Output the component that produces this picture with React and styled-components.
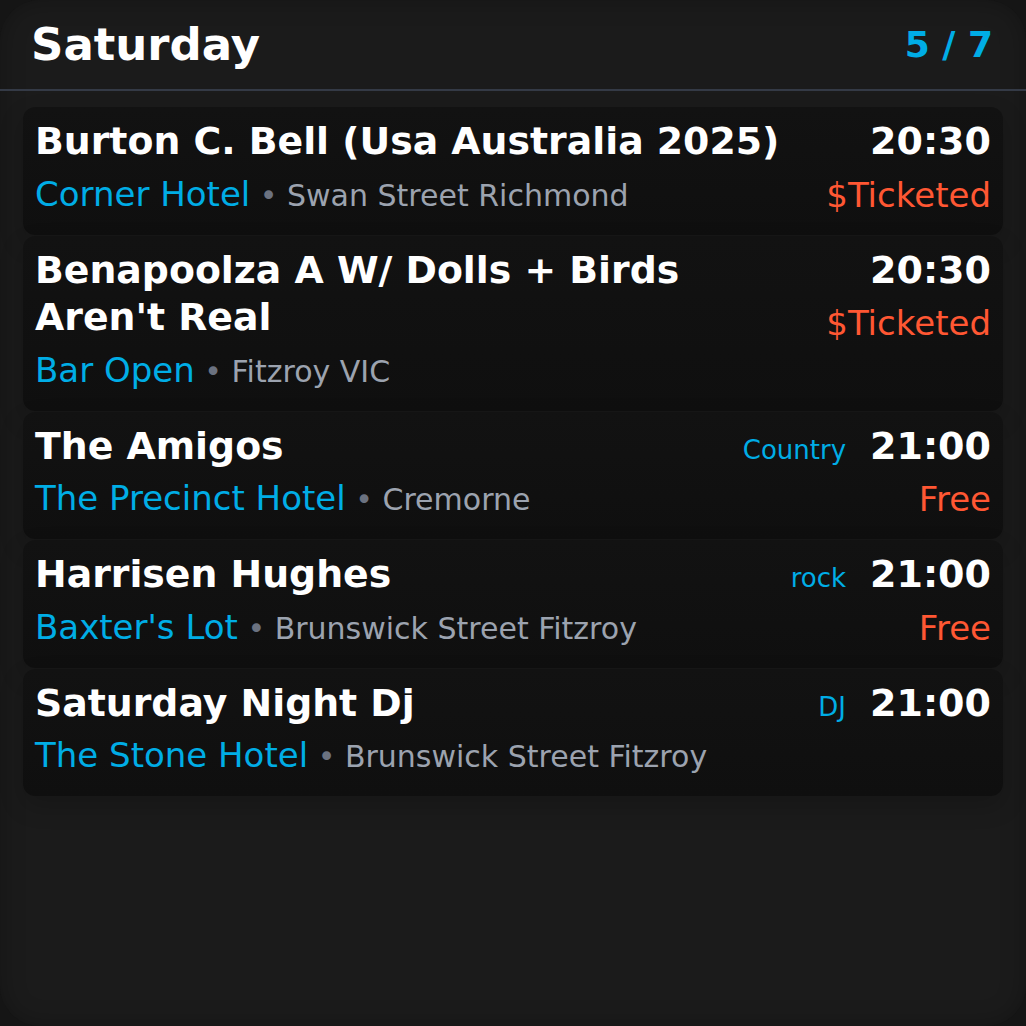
import React from "react";
import styled, { createGlobalStyle } from "styled-components";

const events = [
  {
    title: "Burton C. Bell (Usa Australia 2025)",
    venue: "Corner Hotel",
    suburb: "Swan Street Richmond",
    time: "20:30",
    price: "$Ticketed",
  },
  {
    title: "Benapoolza A W/ Dolls + Birds Aren't Real",
    venue: "Bar Open",
    suburb: "Fitzroy VIC",
    time: "20:30",
    price: "$Ticketed",
  },
  {
    title: "The Amigos",
    venue: "The Precinct Hotel",
    suburb: "Cremorne",
    time: "21:00",
    genre: "Country",
    price: "Free",
  },
  {
    title: "Harrisen Hughes",
    venue: "Baxter's Lot",
    suburb: "Brunswick Street Fitzroy",
    time: "21:00",
    genre: "rock",
    price: "Free",
  },
  {
    title: "Saturday Night Dj",
    venue: "The Stone Hotel",
    suburb: "Brunswick Street Fitzroy",
    time: "21:00",
    genre: "DJ",
  },
];

const App = () => {
  return (
    <>
      <GlobalStyle />
      <Screen>
        <Header>
          <Day>Saturday</Day>
          <Pager>5 / 7</Pager>
        </Header>
        <List>
          {events.map((ev, i) => (
            <Card key={i}>
              <Info>
                <Title>{ev.title}</Title>
                <Place>
                  <Venue>{ev.venue}</Venue>
                  <Dot> • </Dot>
                  <Suburb>{ev.suburb}</Suburb>
                </Place>
              </Info>
              <Side>
                <TimeRow>
                  {ev.genre && <Genre>{ev.genre}</Genre>}
                  <Time>{ev.time}</Time>
                </TimeRow>
                {ev.price && <Price>{ev.price}</Price>}
              </Side>
            </Card>
          ))}
        </List>
      </Screen>
    </>
  );
};

const GlobalStyle = createGlobalStyle`
  html, body {
    margin: 0;
    padding: 0;
    background: #151515;
  }
  body {
    font-family: "DejaVu Sans", "Liberation Sans", sans-serif;
  }
`;

const Screen = styled.div`
  width: 1026px;
  height: 1026px;
  box-sizing: border-box;
  background: #1b1b1b;
  border-radius: 40px;
  overflow: hidden;
  box-shadow: inset 0 0 24px rgba(0, 0, 0, 0.25);
`;

const Header = styled.div`
  display: flex;
  align-items: center;
  justify-content: space-between;
  padding: 18px 33px 18px 31px;
  border-bottom: 2px solid #343a46;
`;

const Day = styled.h1`
  margin: 0;
  font-size: 45px;
  line-height: 53px;
  font-weight: bold;
  color: #ffffff;
`;

const Pager = styled.div`
  font-size: 36px;
  line-height: 43px;
  font-weight: bold;
  color: #00ade6;
`;

const List = styled.div`
  display: flex;
  flex-direction: column;
  gap: 1px;
  padding: 16px 23px;
`;

const Card = styled.div`
  display: flex;
  justify-content: space-between;
  gap: 24px;
  padding: 11px 12px 20px;
  border-radius: 12px;
  background: linear-gradient(180deg, #121212 0%, #0f0f0f 100%);
  box-shadow: 0 10px 24px rgba(0, 0, 0, 0.18);
`;

const Info = styled.div`
  flex: 1;
  min-width: 0;
`;

const Title = styled.div`
  font-size: 37.8px;
  line-height: 47.5px;
  font-weight: bold;
  color: #ffffff;
`;

const Place = styled.div`
  margin-top: 9px;
  height: 40px;
  font-size: 34px;
  line-height: 38px;
  white-space: nowrap;
`;

const Venue = styled.span`
  color: #00ade6;
`;

const Dot = styled.span`
  font-size: 30px;
  color: #6b7280;
`;

const Suburb = styled.span`
  font-size: 30px;
  color: #9ca3af;
`;

const Side = styled.div`
  display: flex;
  flex-direction: column;
  align-items: flex-end;
  flex-shrink: 0;
`;

const TimeRow = styled.div`
  display: flex;
  align-items: baseline;
  gap: 24px;
`;

const Genre = styled.span`
  font-size: 26px;
  color: #00ade6;
`;

const Time = styled.span`
  font-size: 38px;
  line-height: 47.5px;
  font-weight: bold;
  color: #ffffff;
`;

const Price = styled.div`
  margin-top: 9px;
  font-size: 34px;
  line-height: 40px;
  color: #ff5733;
`;

export default App;
